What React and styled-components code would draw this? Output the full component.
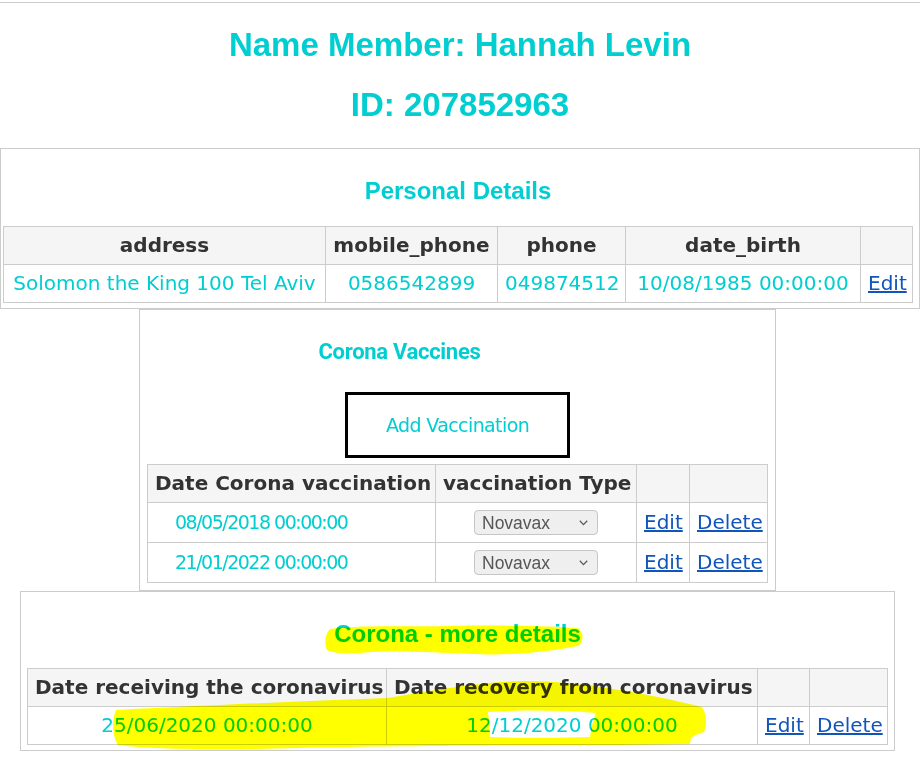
import React from 'react';
import styled, { createGlobalStyle } from 'styled-components';

const CYAN = '#00ced1';
const LINE = '#cccccc';

const GlobalStyle = createGlobalStyle`
  html, body {
    margin: 0;
    padding: 0;
    background: #ffffff;
  }
  body {
    font-family: "DejaVu Sans", Verdana, sans-serif;
  }
`;

const personalCols = [
    { label: 'address', w: 322 },
    { label: 'mobile_phone', w: 172 },
    { label: 'phone', w: 128 },
    { label: 'date_birth', w: 235 },
    { label: '', w: 52 },
];

const vaccineCols = [
    { label: 'Date Corona vaccination', w: 288 },
    { label: 'vaccination Type', w: 201 },
    { label: '', w: 53 },
    { label: '', w: 78 },
];

const coronaCols = [
    { label: 'Date receiving the coronavirus', w: 359 },
    { label: 'Date recovery from coronavirus', w: 371 },
    { label: '', w: 52 },
    { label: '', w: 78 },
];

const vaccines = [
    { date: '08/05/2018 00:00:00', type: 'Novavax' },
    { date: '21/01/2022 00:00:00', type: 'Novavax' },
];

// 테이블 머리
const TableHead = ({ cols }) => (
    <>
        <colgroup>
            {cols.map((c, i) => <Col key={i} $w={c.w} />)}
        </colgroup>
        <thead>
            <tr>
                {cols.map((c, i) => <Th key={i}>{c.label}</Th>)}
            </tr>
        </thead>
    </>
);

const sum = (cols) => cols.reduce((acc, c) => acc + c.w, 0);

export default function App() {
    return (
        <>
            <GlobalStyle />
            <Page>
                <MemberHeader>
                    <MemberTitle>Name Member: Hannah Levin</MemberTitle>
                    <MemberTitle>ID: 207852963</MemberTitle>
                </MemberHeader>

                {/* 개인 정보 */}
                <Panel $pad="0 6px 5px 2px" $start>
                    <Title $gap={21}>Personal Details</Title>
                    <Table $width={sum(personalCols)}>
                        <TableHead cols={personalCols} />
                        <tbody>
                            <tr>
                                <Td>Solomon the King 100 Tel Aviv</Td>
                                <Td>0586542899</Td>
                                <Td>049874512</Td>
                                <Td>10/08/1985 00:00:00</Td>
                                <Td><Link href="#">Edit</Link></Td>
                            </tr>
                        </tbody>
                    </Table>
                </Panel>

                {/* 백신 */}
                <Panel $pad="0 7px 7px">
                    <Title $gap={26} $narrow $pr={116}>Corona Vaccines</Title>
                    <AddButton type="button">Add Vaccination</AddButton>
                    <Table $width={sum(vaccineCols)}>
                        <TableHead cols={vaccineCols} />
                        <tbody>
                            {vaccines.map((v, i) => (
                                <VaccineRow key={i}>
                                    <Td $narrow>{v.date}</Td>
                                    <Td>
                                        <SelectWrap>
                                            <TypeSelect defaultValue={v.type}>
                                                <option>Novavax</option>
                                                <option>Pfizer</option>
                                                <option>Moderna</option>
                                                <option>AstraZeneca</option>
                                            </TypeSelect>
                                            <Chevron viewBox="0 0 9 6">
                                                <path d="M0.8 0.8 L4.5 4.6 L8.2 0.8" fill="none" stroke="#5a5a5a" strokeWidth="1.3" />
                                            </Chevron>
                                        </SelectWrap>
                                    </Td>
                                    <Td><Link href="#">Edit</Link></Td>
                                    <Td><Link href="#">Delete</Link></Td>
                                </VaccineRow>
                            ))}
                        </tbody>
                    </Table>
                </Panel>

                {/* 코로나 상세 */}
                <Panel $pad="0 6px 5px">
                    <Title $gap={20}>Corona - more details</Title>
                    <Table $width={sum(coronaCols)}>
                        <TableHead cols={coronaCols} />
                        <tbody>
                            <tr>
                                <Td>25/06/2020 00:00:00</Td>
                                <Td>12/12/2020 00:00:00</Td>
                                <Td><Link href="#">Edit</Link></Td>
                                <Td><Link href="#">Delete</Link></Td>
                            </tr>
                        </tbody>
                    </Table>
                </Panel>

                {/* 형광펜 표시 */}
                <Highlight viewBox="0 0 920 775">
                    <path
                        fill="#ffff00"
                        d="M330 629 C360 625, 400 627, 450 626 C500 625, 550 626, 578 628 C584 633, 584 642, 578 646 C550 651, 520 656, 470 654 C430 652, 390 650, 360 653 C345 654, 332 653, 327 650 C324 643, 325 634, 330 629 Z"
                    />
                    <path
                        fill="#ffff00"
                        fillRule="evenodd"
                        d="M116 710 C200 706, 300 701, 388 698 C430 691, 480 682, 525 681 C580 681, 650 694, 702 707 C707 715, 707 725, 704 732 C698 734, 693 736, 691 738 L690 744 C600 746, 420 745, 300 748 C200 751, 140 748, 118 745 C112 736, 112 719, 116 710 Z
                           M488 712 C520 710, 560 710, 596 713 C593 721, 591 729, 590 737 C560 738, 520 738, 490 737 C490 728, 489 720, 488 712 Z"
                    />
                </Highlight>
            </Page>
        </>
    );
}

const Page = styled.div`
    position: relative;
    width: 920px;
    min-height: 775px;
    box-sizing: border-box;
    padding: 2px 5px 0 0;
    display: flex;
    flex-direction: column;
    align-items: center;
    overflow: hidden;
`;

const MemberHeader = styled.header`
    align-self: stretch;
    margin-right: -5px;
    border-top: 1px solid ${LINE};
    padding: 23px 0 24px;
    text-align: center;
`;

const MemberTitle = styled.h1`
    margin: 0;
    font: bold 33px/38px "Liberation Sans", Arial, sans-serif;
    color: ${CYAN};
    & + & {
        margin-top: 22px;
    }
`;

const Panel = styled.section`
    box-sizing: border-box;
    align-self: ${p => p.$start ? 'flex-start' : 'center'};
    border: 1px solid ${LINE};
    padding: ${p => p.$pad};
    display: flex;
    flex-direction: column;
    align-items: center;
`;

const Title = styled.h2`
    align-self: stretch;
    margin: 28px 0 ${p => p.$gap}px;
    padding-right: ${p => p.$pr || 0}px;
    text-align: center;
    font-family: ${p => p.$narrow
        ? 'Roboto, "Liberation Sans", Arial, sans-serif'
        : '"Liberation Sans", Arial, sans-serif'};
    font-weight: bold;
    font-size: ${p => p.$narrow ? 22 : 24}px;
    letter-spacing: ${p => p.$narrow ? '-0.3px' : 'normal'};
    line-height: 28px;
    color: ${CYAN};
`;

const AddButton = styled.button`
    box-sizing: border-box;
    width: 225px;
    height: 66px;
    margin: 0 0 6px;
    padding: 0;
    border: 3px solid #000000;
    background: #ffffff;
    font-family: "DejaVu Sans", sans-serif;
    font-size: 19px;
    letter-spacing: -0.6px;
    color: ${CYAN};
    cursor: pointer;
`;

const Table = styled.table`
    width: ${p => p.$width}px;
    table-layout: fixed;
    border-collapse: collapse;
`;

const Col = styled.col`
    width: ${p => p.$w}px;
`;

const Th = styled.th`
    padding: 7px;
    border: 1px solid ${LINE};
    background: #f5f5f5;
    color: #333333;
    font: bold 20px/23px "DejaVu Sans", Verdana, sans-serif;
    text-align: center;
    white-space: nowrap;
`;

const Td = styled.td`
    padding: ${p => p.$narrow ? '7px 7px 7px 27px' : '7px'};
    border: 1px solid ${LINE};
    color: ${CYAN};
    font-family: "DejaVu Sans", Verdana, sans-serif;
    font-size: ${p => p.$narrow ? 19 : 20}px;
    letter-spacing: ${p => p.$narrow ? '-1.5px' : 'normal'};
    line-height: 23px;
    text-align: ${p => p.$narrow ? 'left' : 'center'};
    vertical-align: middle;
    white-space: nowrap;
`;

const VaccineRow = styled.tr`
    height: 40px;
`;

const Link = styled.a`
    color: #1155bb;
    text-decoration: underline;
`;

const SelectWrap = styled.span`
    position: relative;
    display: inline-block;
    vertical-align: middle;
`;

const TypeSelect = styled.select`
    appearance: none;
    box-sizing: border-box;
    display: block;
    width: 124px;
    height: 25px;
    margin: 0;
    padding: 0 0 0 7px;
    border: 1px solid #c6c6c6;
    border-radius: 4px;
    background: #efefef;
    font: 17.5px "Liberation Sans", Arial, sans-serif;
    color: #555555;
`;

const Chevron = styled.svg`
    position: absolute;
    right: 10px;
    top: 10px;
    width: 9px;
    height: 6px;
    pointer-events: none;
`;

const Highlight = styled.svg`
    position: absolute;
    left: 0;
    top: 0;
    width: 920px;
    height: 775px;
    pointer-events: none;
    mix-blend-mode: multiply;
`;
